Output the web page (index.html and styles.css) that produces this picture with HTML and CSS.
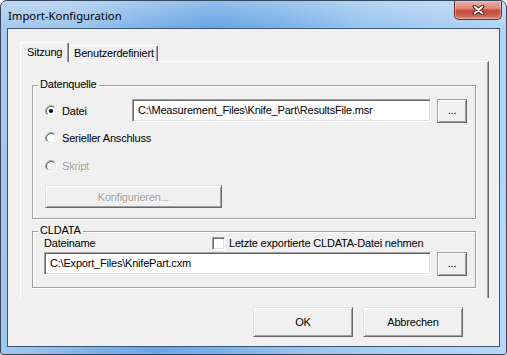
FILE: index.html
```html
<!DOCTYPE html>
<html lang="de">
<head>
<meta charset="utf-8">
<title>Import-Konfiguration</title>
<link rel="stylesheet" href="styles.css">
</head>
<body>
<div class="window">
  <div class="titlebar">
    <span class="title">Import-Konfiguration</span>
    <div class="close">
      <svg width="13" height="10" viewBox="0 0 13 10">
        <path d="M2.5 1.5 L10.5 8.5 M10.5 1.5 L2.5 8.5" stroke="#4a2420" stroke-width="4" stroke-linecap="round"/>
        <path d="M2.5 1.5 L10.5 8.5 M10.5 1.5 L2.5 8.5" stroke="#ffffff" stroke-width="2" stroke-linecap="round"/>
      </svg>
    </div>
  </div>
  <div class="client">
    <div class="tabs">
      <div class="tab tab-active">Sitzung</div>
      <div class="tab tab-custom">Benutzerdefiniert</div>
    </div>
    <div class="panel">
      <div class="group group-source">
        <span class="legend">Datenquelle</span>
        <div class="row row-file">
          <div class="radio-label">
            <svg class="radio" width="12" height="12" viewBox="0 0 12 12">
              <circle cx="6" cy="6" r="5" fill="#ffffff"/>
              <path d="M2.11 9.89 A5.5 5.5 0 0 1 9.89 2.11" fill="none" stroke="#a0a0a0"/>
              <path d="M9.89 2.11 A5.5 5.5 0 0 1 2.11 9.89" fill="none" stroke="#ffffff"/>
              <path d="M2.82 9.18 A4.5 4.5 0 0 1 9.18 2.82" fill="none" stroke="#696969"/>
              <path d="M9.18 2.82 A4.5 4.5 0 0 1 2.82 9.18" fill="none" stroke="#e3e3e3"/>
              <circle cx="6" cy="6" r="2" fill="#000000"/>
            </svg>
            <span>Datei</span>
          </div>
          <div class="edit edit-file">C:\Measurement_Files\Knife_Part\ResultsFile.msr</div>
          <div class="btn btn-browse">...</div>
        </div>
        <div class="row row-serial">
          <div class="radio-label">
            <svg class="radio" width="12" height="12" viewBox="0 0 12 12">
              <circle cx="6" cy="6" r="5" fill="#ffffff"/>
              <path d="M2.11 9.89 A5.5 5.5 0 0 1 9.89 2.11" fill="none" stroke="#a0a0a0"/>
              <path d="M9.89 2.11 A5.5 5.5 0 0 1 2.11 9.89" fill="none" stroke="#ffffff"/>
              <path d="M2.82 9.18 A4.5 4.5 0 0 1 9.18 2.82" fill="none" stroke="#696969"/>
              <path d="M9.18 2.82 A4.5 4.5 0 0 1 2.82 9.18" fill="none" stroke="#e3e3e3"/>
            </svg>
            <span>Serieller Anschluss</span>
          </div>
        </div>
        <div class="row row-script">
          <div class="radio-label disabled">
            <svg class="radio" width="12" height="12" viewBox="0 0 12 12">
              <circle cx="6" cy="6" r="5" fill="#f0f0f0"/>
              <path d="M2.11 9.89 A5.5 5.5 0 0 1 9.89 2.11" fill="none" stroke="#a0a0a0"/>
              <path d="M9.89 2.11 A5.5 5.5 0 0 1 2.11 9.89" fill="none" stroke="#ffffff"/>
              <path d="M2.82 9.18 A4.5 4.5 0 0 1 9.18 2.82" fill="none" stroke="#696969"/>
              <path d="M9.18 2.82 A4.5 4.5 0 0 1 2.82 9.18" fill="none" stroke="#e3e3e3"/>
            </svg>
            <span>Skript</span>
          </div>
        </div>
        <div class="btn btn-config disabled">Konfigurieren...</div>
      </div>
      <div class="group group-cldata">
        <span class="legend">CLDATA</span>
        <div class="row row-name">
          <span class="name-label">Dateiname</span>
          <span class="checkbox"></span>
          <span class="check-text">Letzte exportierte CLDATA-Datei nehmen</span>
        </div>
        <div class="row row-cl-file">
          <div class="edit edit-cl">C:\Export_Files\KnifePart.cxm</div>
          <div class="btn btn-browse">...</div>
        </div>
      </div>
    </div>
    <div class="buttons">
      <div class="btn btn-dialog">OK</div>
      <div class="btn btn-dialog">Abbrechen</div>
    </div>
  </div>
</div>
</body>
</html>
```

FILE: styles.css
```css
html, body {
  margin: 0;
  padding: 0;
  background: #ffffff;
}

body {
  font-family: "Liberation Sans", Arial, sans-serif;
  font-size: 11px;
  letter-spacing: -0.2px;
  color: #000000;
}

.window {
  width: 507px;
  height: 355px;
  box-sizing: border-box;
  border: 1px solid #34475d;
  border-radius: 7px 7px 3px 3px;
  overflow: hidden;
  display: flex;
  flex-direction: column;
  background:
    linear-gradient(180deg, rgba(255,255,255,0.28) 0px, rgba(255,255,255,0) 26px),
    linear-gradient(100deg, #a9cbee 0%, #9fc5ed 14%, #7fb3e8 26%, #6aa5e4 38%, #7ab1e8 50%, #98c4ef 64%, #a9d0f3 80%, #b6d8f6 100%);
}

.titlebar {
  height: 27px;
  display: flex;
  align-items: flex-start;
  flex: none;
}

.title {
  margin: 7px 0 0 7px;
  font-family: "Noto Sans", "Open Sans", sans-serif;
  font-size: 11.3px;
  letter-spacing: 0;
  line-height: 15px;
  color: #000000;
}

.close {
  margin: 0 4px 0 auto;
  width: 48px;
  height: 19px;
  box-sizing: border-box;
  border: 1px solid #6a2c24;
  border-top: none;
  border-radius: 0 0 5px 5px;
  background: linear-gradient(180deg, #eab1a4 0%, #de8a79 40%, #c84b3a 52%, #c85a4c 75%, #dc8a7a 100%);
  box-shadow: inset 0 0 0 1px rgba(255,220,210,0.45);
  display: flex;
  align-items: center;
  justify-content: center;
}

.client {
  flex: 1;
  margin: 0 6px 7px 6px;
  border: 1px solid #3d5673;
  background: #f0f0f0;
  display: flex;
  flex-direction: column;
}

/* Tabs */
.tabs {
  display: flex;
  align-items: flex-end;
  height: 19px;
  margin: 13px 0 0 12px;
}

.tab {
  box-sizing: border-box;
  height: 16px;
  line-height: 14px;
  border-top: 1px solid #ffffff;
  border-left: 1px solid #ffffff;
  border-right: 1px solid #696969;
  box-shadow: inset -1px 0 0 #a0a0a0;
  border-radius: 2px 2px 0 0;
  background: #f0f0f0;
  white-space: nowrap;
}

.tab-active {
  position: relative;
  z-index: 1;
  width: 49px;
  height: 20px;
  margin-bottom: -1px;
  padding: 2px 0 0 6px;
}

.tab-custom {
  width: 89px;
  padding-left: 4px;
}

.panel {
  margin-left: 12px;
  width: 469px;
  height: 237px;
  box-sizing: border-box;
  border-top: 1px solid #ffffff;
  border-left: 1px solid #ffffff;
  border-right: 1px solid #696969;
  box-shadow: inset -1px 0 0 #a0a0a0;
  padding: 23px 0 0 11px;
}

/* Group boxes */
.group {
  position: relative;
  width: 444px;
  box-sizing: border-box;
  border: 1px solid #a0a0a0;
  box-shadow: 1px 1px 0 #ffffff, inset 1px 1px 0 #ffffff;
}

.legend {
  position: absolute;
  top: -8px;
  left: 5px;
  padding: 0 2px;
  line-height: 13px;
  background: #f0f0f0;
}

.group-source {
  height: 134px;
  padding: 13px 0 0 12px;
}

.group-cldata {
  height: 57px;
  margin-top: 12px;
  padding: 4px 0 0 11px;
}

.row {
  display: flex;
  align-items: center;
}

.row-file {
  height: 24px;
}

.row-serial {
  height: 16px;
  margin-top: 7px;
}

.row-script {
  height: 16px;
  margin-top: 12px;
}

.radio-label {
  width: 87px;
  display: flex;
  align-items: center;
  gap: 5px;
  white-space: nowrap;
}

.radio {
  flex: none;
  display: block;
}

.disabled {
  color: #a0a0a0;
  text-shadow: 1px 1px 0 #ffffff;
}

/* Edits */
.edit {
  box-sizing: border-box;
  height: 23px;
  align-self: flex-start;
  border-style: solid;
  border-width: 1px;
  border-color: #a0a0a0 #ffffff #ffffff #a0a0a0;
  box-shadow: inset 1px 1px 0 #696969, inset -1px -1px 0 #e3e3e3;
  background: #ffffff;
  padding: 0 0 0 5px;
  line-height: 21px;
  letter-spacing: -0.2px;
  white-space: nowrap;
  overflow: hidden;
}

.edit-file {
  width: 299px;
  margin-right: 6px;
}

.edit-cl {
  width: 387px;
  margin-right: 6px;
}

/* Buttons */
.btn {
  box-sizing: border-box;
  border-style: solid;
  border-width: 1px;
  border-color: #e3e3e3 #696969 #696969 #e3e3e3;
  box-shadow: inset 1px 1px 0 #ffffff, inset -1px -1px 0 #a0a0a0;
  background: #f0f0f0;
  display: flex;
  align-items: center;
  justify-content: center;
  white-space: nowrap;
}

.btn-browse {
  width: 30px;
  height: 24px;
  border-color: #a0a0a0 #696969 #696969 #a0a0a0;
  padding-bottom: 2px;
}

.btn-config {
  width: 177px;
  height: 23px;
  margin-top: 11px;
}

.row-name {
  height: 14px;
}

.name-label {
  width: 168px;
}

.checkbox {
  box-sizing: border-box;
  width: 13px;
  height: 13px;
  border-style: solid;
  border-width: 1px;
  border-color: #a0a0a0 #ffffff #ffffff #a0a0a0;
  box-shadow: inset 1px 1px 0 #696969, inset -1px -1px 0 #e3e3e3;
  background: #ffffff;
  margin-right: 4px;
}

.row-cl-file {
  height: 24px;
  margin-top: 2px;
}

.buttons {
  display: flex;
  justify-content: flex-end;
  gap: 10px;
  margin-top: 9px;
  padding-right: 36px;
}

.btn-dialog {
  width: 100px;
  height: 30px;
}
```
